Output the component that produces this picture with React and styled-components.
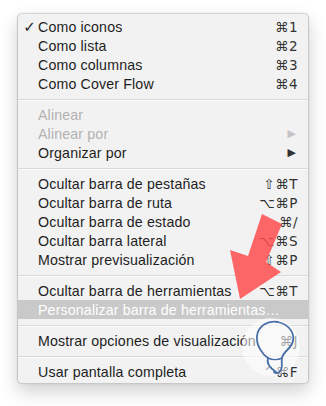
import React from "react";
import styled, { createGlobalStyle } from "styled-components";

const Global = createGlobalStyle`
  html, body { margin: 0; padding: 0; background: #ffffff; }
  body { font-family: "Liberation Sans", Arial, sans-serif; }
`;

const Page = styled.div`
  position: relative;
  width: 326px;
  height: 406px;
  padding: 13px 0 0 17px;
  box-sizing: border-box;
`;

const Menu = styled.div`
  width: 292px;
  box-sizing: border-box;
  background: #f2f2f2;
  border: 1px solid #c8c8c8;
  border-top-color: #d4d4d4;
  border-radius: 5px;
  padding: 3px 0 2px;
  box-shadow: 0 8px 18px rgba(0, 0, 0, 0.18), 0 0 2px rgba(0, 0, 0, 0.08);
  display: flex;
  flex-direction: column;
`;

const Row = styled.div`
  height: 19px;
  display: grid;
  grid-template-columns: 20px 1fr auto;
  align-items: center;
  padding: 0 10px 0 0;
  font-size: 14.2px;
  letter-spacing: 0.15px;
  color: ${(p) => (p.$disabled ? "#b3b3b3" : p.$active ? "#ffffff" : "#1e1e1e")};
  background: ${(p) => (p.$active ? "#c9c9c9" : "transparent")};
`;

const Check = styled.span`
  font-family: "DejaVu Sans", sans-serif;
  font-size: 15px;
  font-weight: bold;
  text-align: right;
  padding-right: 2px;
  color: #1e1e1e;
`;

const Label = styled.span`
  white-space: nowrap;
`;

const Shortcut = styled.span`
  font-family: "DejaVu Sans", "Liberation Sans", sans-serif;
  font-size: 13.5px;
  text-align: right;
  letter-spacing: 0.5px;
  color: #333333;
`;

const Arrow = styled.span`
  font-family: "DejaVu Sans", sans-serif;
  font-size: 11px;
  padding-right: 2px;
  color: ${(p) => (p.$disabled ? "#c4c4c4" : "#333333")};
`;

const Separator = styled.div`
  height: 12px;
  display: flex;
  align-items: center;
  &::after {
    content: "";
    flex: 1;
    height: 1px;
    background: #d9d9d9;
    box-shadow: 0 1px 0 #fafafa;
  }
`;

const Overlay = styled.svg`
  position: absolute;
  left: 0;
  top: 0;
  pointer-events: none;
`;

const groups = [
  [
    { check: true, label: "Como iconos", sc: "⌘1" },
    { label: "Como lista", sc: "⌘2" },
    { label: "Como columnas", sc: "⌘3" },
    { label: "Como Cover Flow", sc: "⌘4" },
  ],
  [
    { label: "Alinear", disabled: true },
    { label: "Alinear por", disabled: true, sub: true },
    { label: "Organizar por", sub: true },
  ],
  [
    { label: "Ocultar barra de pestañas", sc: "⇧⌘T" },
    { label: "Ocultar barra de ruta", sc: "⌥⌘P" },
    { label: "Ocultar barra de estado", sc: "⌘/" },
    { label: "Ocultar barra lateral", sc: "⌥⌘S" },
    { label: "Mostrar previsualización", sc: "⇧⌘P" },
  ],
  [
    { label: "Ocultar barra de herramientas", sc: "⌥⌘T" },
    { label: "Personalizar barra de herramientas…", active: true },
  ],
  [{ label: "Mostrar opciones de visualización", sc: "⌘J" }],
  [{ label: "Usar pantalla completa", sc: "^⌘F" }],
];

export default function App() {
  return (
    <>
      <Global />
      <Page>
        <Menu>
          {groups.map((g, gi) => (
            <React.Fragment key={gi}>
              {gi > 0 && <Separator />}
              {g.map((it) => (
                <Row key={it.label} $disabled={it.disabled} $active={it.active}>
                  <Check>{it.check ? "✓" : ""}</Check>
                  <Label>{it.label}</Label>
                  {it.sub ? (
                    <Arrow $disabled={it.disabled}>▶</Arrow>
                  ) : (
                    <Shortcut>{it.sc || ""}</Shortcut>
                  )}
                </Row>
              ))}
            </React.Fragment>
          ))}
        </Menu>
        <Overlay width="326" height="406" viewBox="0 0 326 406">
          <polygon
            points="262,214 282,224 266,262 281,272 240,299 230,250 248,256"
            fill="#ff4d4d"
            fillOpacity="0.85"
          />
          <circle cx="271" cy="347" r="29" fill="#ffffff" fillOpacity="0.55" />
          <path
            d="M276 372 C 270 368, 266 364, 268 358 C 262 354, 256 345, 257 336 C 258 326, 268 320, 278 322 C 290 325, 296 334, 292 344 C 289 350, 283 352, 282 358 C 281 362, 283 366, 281 370 C 279 373, 276 374, 274 372"
            fill="none"
            stroke="#4a6fa8"
            strokeWidth="1.8"
            strokeLinecap="round"
          />
          <path
            d="M268 358 C 272 360, 278 360, 282 358"
            fill="none"
            stroke="#4a6fa8"
            strokeWidth="1.6"
          />
        </Overlay>
      </Page>
    </>
  );
}
